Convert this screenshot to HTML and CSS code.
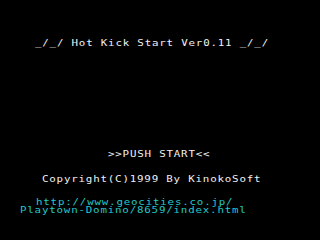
FILE: index.html
```html
<!DOCTYPE html>
<html>
<head>
<meta charset="utf-8">
<link rel="stylesheet" href="styles.css">
</head>
<body>
<div class="screen">
  <div class="line title"><span class="txt">_/_/ Hot Kick Start Ver0.11 _/_/</span></div>
  <div class="line push"><span class="txt">&gt;&gt;PUSH START&lt;&lt;</span></div>
  <div class="line copy"><span class="txt">Copyright(C)1999 By KinokoSoft</span></div>
  <div class="url">
    <div class="line url1"><span class="txt">http://www.geocities.co.jp/</span></div>
    <div class="line url2"><span class="txt">Playtown-Domino/8659/index.html</span></div>
  </div>
</div>
</body>
</html>
```
FILE: styles.css
```css
html, body {
  margin: 0;
  padding: 0;
  background: #000;
}
.screen {
  width: 320px;
  height: 240px;
  background: #000;
  display: flex;
  flex-direction: column;
  font-family: "DejaVu Sans Mono", "Liberation Mono", monospace;
  font-size: 9px;
  letter-spacing: 0.675px;
  color: #f0f0f0;
  padding-top: 39px;
  box-sizing: border-box;
}
.line {
  height: 8px;
  line-height: 8px;
  white-space: pre;
}
.txt {
  display: inline-block;
  transform: scaleX(1.2);
  transform-origin: left center;
}
.title { padding-left: 35px; }
.push { padding-left: 108px; margin-top: 103px; }
.copy { padding-left: 42px; margin-top: 17px; }
.url { margin-top: 15px; color: #22c8c8; }
.url1 { padding-left: 36px; }
.url2 { padding-left: 20px; }
```
